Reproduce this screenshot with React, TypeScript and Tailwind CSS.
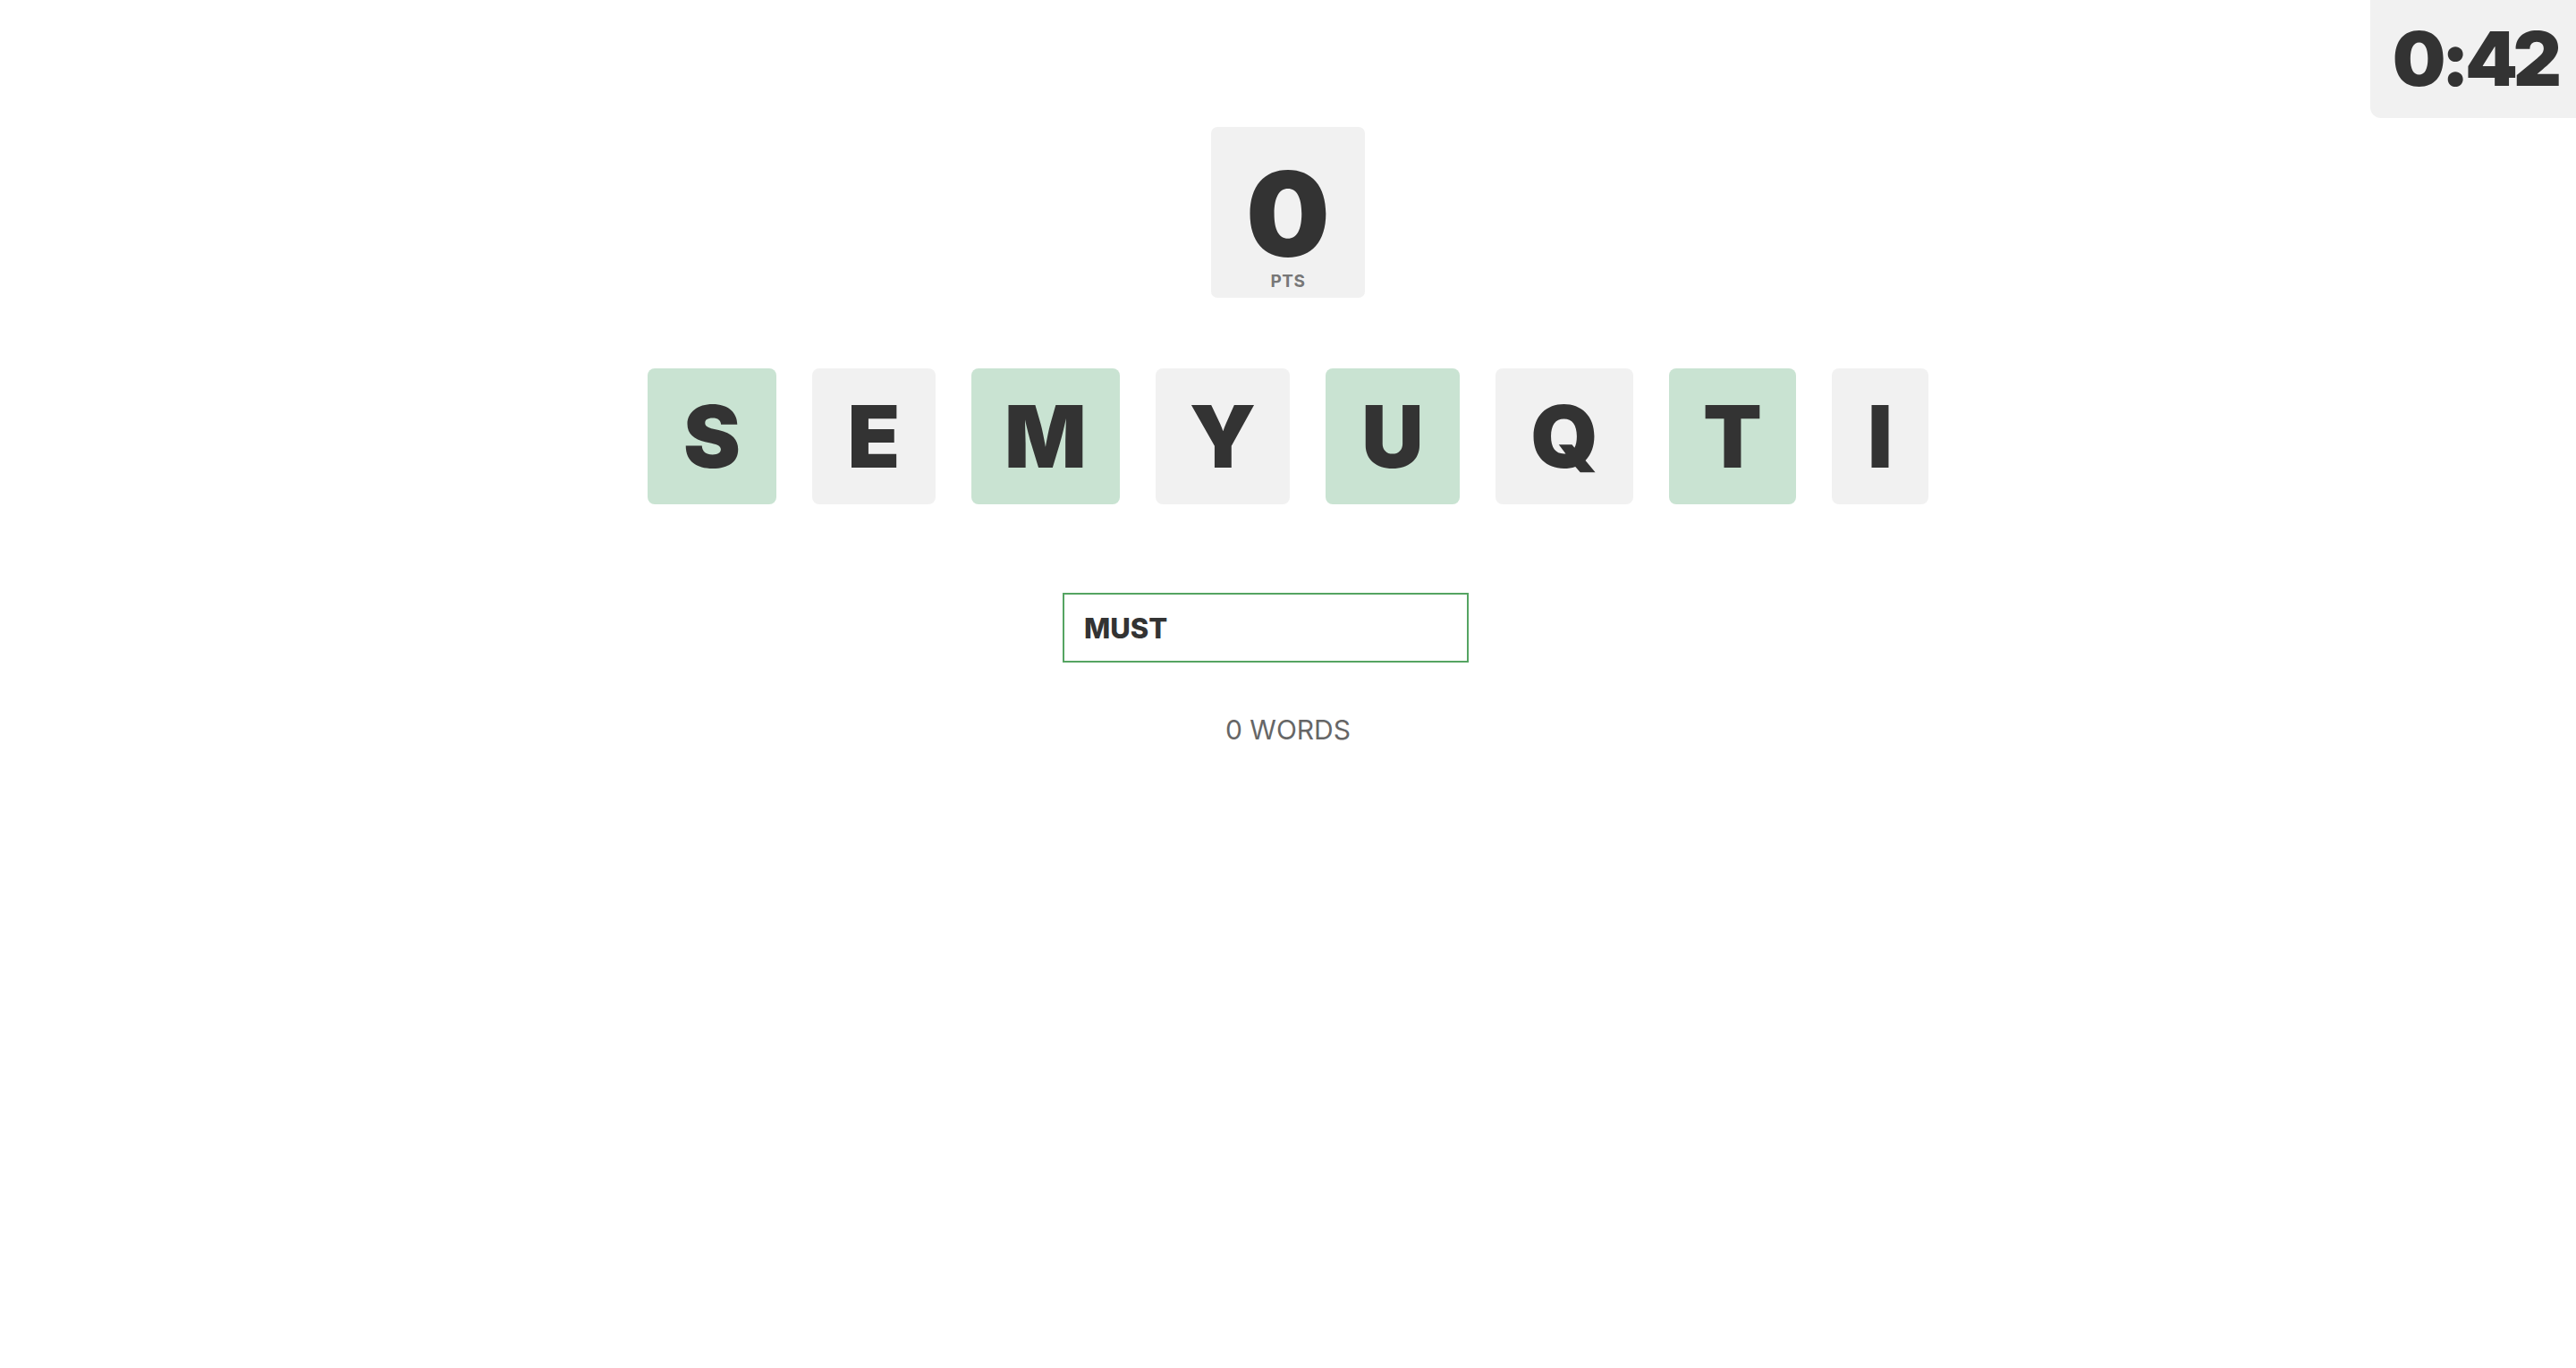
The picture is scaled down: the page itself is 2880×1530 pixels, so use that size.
import React from "react";

const tiles: { l: string; w: string; green: boolean }[] = [
  { l: "S", w: "w-[144px]", green: true },
  { l: "E", w: "w-[138px]", green: false },
  { l: "M", w: "w-[166px]", green: true },
  { l: "Y", w: "w-[150px]", green: false },
  { l: "U", w: "w-[150px]", green: true },
  { l: "Q", w: "w-[154px]", green: false },
  { l: "T", w: "w-[142px]", green: true },
  { l: "I", w: "w-[108px]", green: false },
];

export default function App() {
  return (
    <div
      className="relative min-h-[1530px] w-full bg-white text-[#333333]"
      style={{ fontFamily: "Inter, 'Noto Sans', sans-serif" }}
    >
      <div className="absolute right-0 top-0 flex h-[132px] w-[230px] items-center justify-center rounded-bl-[12px] bg-[#f1f1f1] pl-[4px]">
        <span className="text-[84px] font-black leading-none tracking-[-5px]">0:42</span>
      </div>

      <div className="flex flex-col items-center pt-[142px]">
        <div className="flex h-[191px] w-[172px] flex-col items-center rounded-[7px] bg-[#f1f1f1] pt-[31px]">
          <div className="text-[132px] font-black leading-none">0</div>
          <div className="text-[19px] font-bold leading-none tracking-[0.5px] text-[#777777]">PTS</div>
        </div>

        <div className="mt-[79px] flex gap-[40px]">
          {tiles.map((t) => (
            <div
              key={t.l}
              className={`flex h-[152px] items-center justify-center rounded-[8px] ${t.w} ${
                t.green ? "bg-[#c9e3d2]" : "bg-[#f1f1f1]"
              }`}
            >
              <span className="text-[96px] font-black leading-none">{t.l}</span>
            </div>
          ))}
        </div>

        <div className="mt-[99px] flex">
          <div className="flex h-[78px] w-[454px] items-center border-2 border-[#55a462] pl-[22px]">
            <span className="text-[31px] font-extrabold leading-none">MUST</span>
          </div>
          <div className="w-[50px]" />
        </div>

        <div className="mt-[60px] text-[30px] font-normal leading-none text-[#666666]">0 WORDS</div>
      </div>
    </div>
  );
}
